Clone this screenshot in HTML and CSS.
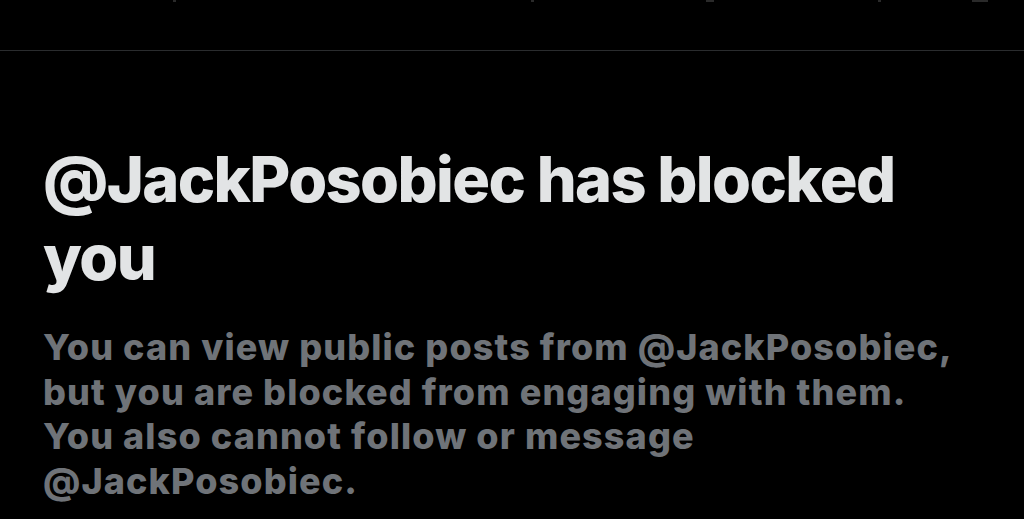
FILE: index.html
```html
<!DOCTYPE html>
<html>
<head>
<meta charset="utf-8">
<link rel="stylesheet" href="styles.css">
</head>
<body>
<header class="topbar">
  <span class="speck s1"></span>
  <span class="speck s2"></span>
  <span class="speck s3"></span>
  <span class="speck s4"></span>
  <span class="speck s5"></span>
</header>
<main class="content">
  <h1 class="title">@JackPosobiec has blocked you</h1>
  <p class="desc">You can view public posts from @JackPosobiec, but you are blocked from engaging with them. You also cannot follow or message @JackPosobiec.</p>
</main>
</body>
</html>
```
FILE: styles.css
```css
html, body {
  margin: 0;
  padding: 0;
  background: #000;
  height: 100%;
  overflow: hidden;
}
body {
  font-family: Inter, "Liberation Sans", sans-serif;
}
.topbar {
  height: 50px;
  border-bottom: 1px solid #2a2c2e;
  position: relative;
}
.speck {
  position: absolute;
  top: 0;
  width: 3px;
  height: 2px;
  background: #2a2a2a;
}
.s1 { left: 173px; }
.s2 { left: 531px; }
.s3 { left: 706px; width: 8px; }
.s4 { left: 878px; }
.s5 { left: 972px; width: 16px; }
.content {
  padding: 0 40px 0 43px;
}
.title {
  margin: 89px 0 0 0;
  font-size: 63px;
  line-height: 78px;
  font-weight: 800;
  color: #e2e4e5;
  letter-spacing: -1.6px;
  width: 900px;
}
.desc {
  margin: 29px 0 0 0;
  font-size: 36px;
  line-height: 44.5px;
  font-weight: 800;
  color: #6f7378;
  letter-spacing: 1.1px;
  width: 915px;
}
```
